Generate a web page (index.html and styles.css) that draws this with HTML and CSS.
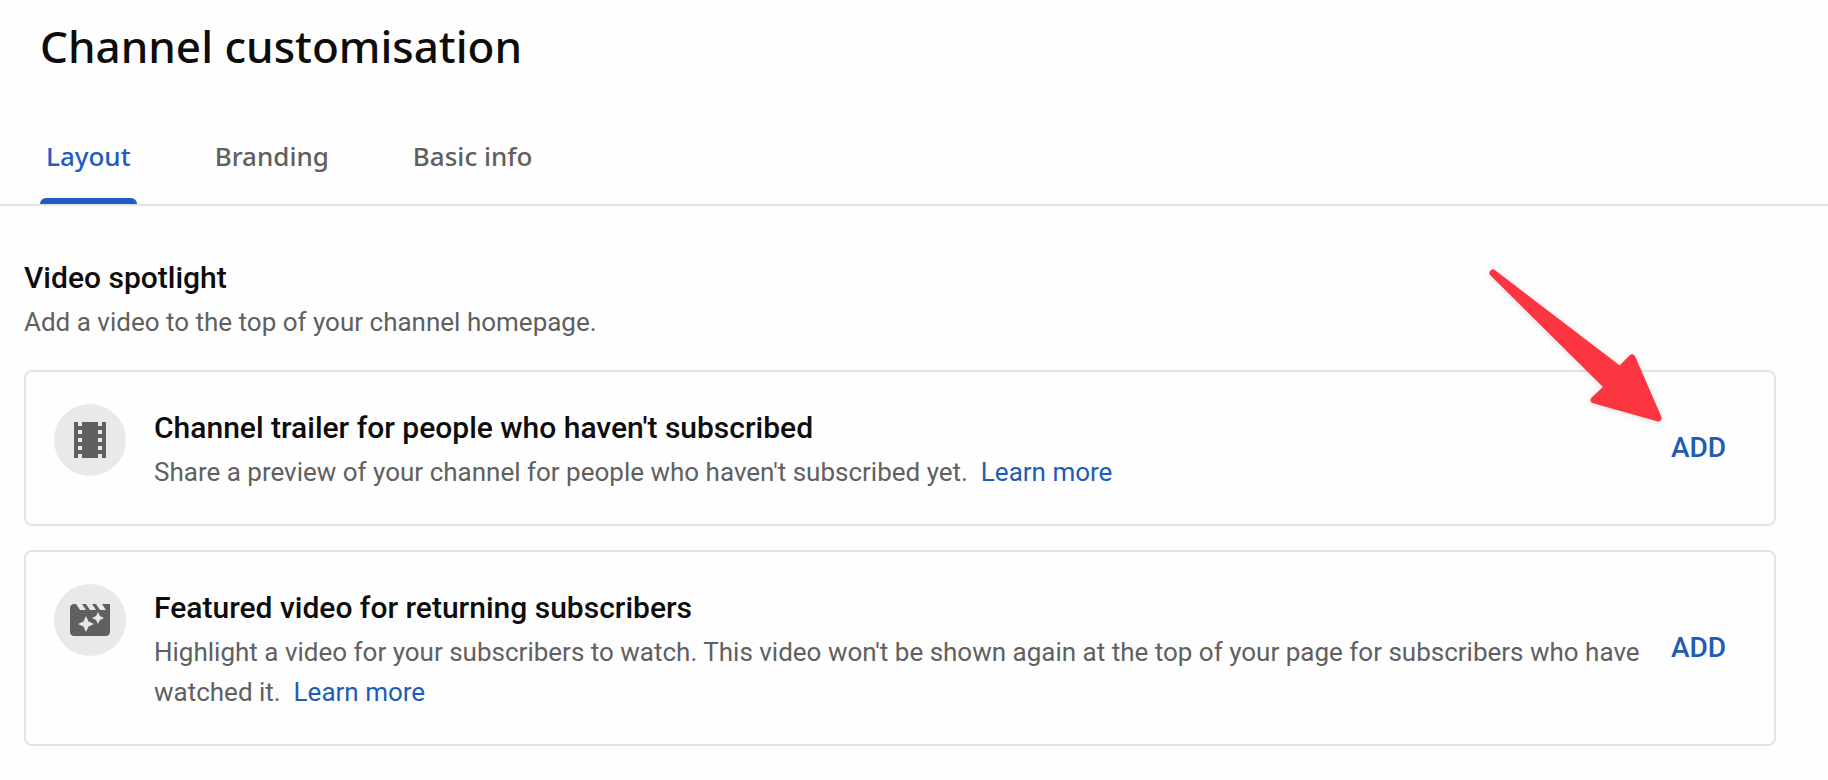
FILE: index.html
```html
<!DOCTYPE html>
<html lang="en-GB">
<head>
    <meta charset="utf-8">
    <meta name="viewport" content="width=device-width, initial-scale=1">
    <title>Channel customisation</title>
    <link rel="stylesheet" href="styles.css">
</head>
<body>

<header class="page-header">
    <h1>Channel customisation</h1>
    <nav class="tabs">
        <a class="tab active" href="#layout" aria-current="page">Layout</a>
        <a class="tab" href="#branding">Branding</a>
        <a class="tab" href="#basic-info">Basic info</a>
    </nav>
</header>

<main class="section" id="layout">
    <h2>Video spotlight</h2>
    <p>Add a video to the top of your channel homepage.</p>

    <section class="card">
        <div class="card-icon">
            <svg viewBox="0 0 24 24" aria-hidden="true">
                <path d="M18 3v2h-2V3H8v2H6V3H4v18h2v-2h2v2h8v-2h2v2h2V3h-2zM8 17H6v-2h2v2zm0-4H6v-2h2v2zm0-4H6V7h2v2zm10 8h-2v-2h2v2zm0-4h-2v-2h2v2zm0-4h-2V7h2v2z"/>
            </svg>
        </div>
        <div class="card-text">
            <h3>Channel trailer for people who haven't subscribed</h3>
            <p>Share a preview of your channel for people who haven't subscribed yet.&nbsp; <a href="#trailer-help">Learn more</a></p>
        </div>
        <button class="add-button" type="button">ADD</button>
        <!-- arrow pointing at the add button -->
        <svg class="arrow" viewBox="0 0 184 164" aria-hidden="true">
            <path d="M9 9L136 106L148 94L174 154L110 136L124 123Z"/>
        </svg>
    </section>

    <section class="card">
        <div class="card-icon">
            <svg viewBox="0 0 24 24" aria-hidden="true">
                <path d="M18 4l2 3h-3l-2-3h-2l2 3h-3l-2-3H8l2 3H7L5 4H4c-1.1 0-1.99.9-1.99 2L2 18c0 1.1.9 2 2 2h16c1.1 0 2-.9 2-2V4h-4zm-6.75 11.25L10 18l-1.25-2.75L6 14l2.75-1.25L10 10l1.25 2.75L14 14l-2.75 1.25zm5.69-3.31L16 14l-.94-2.06L13 11l2.06-.94L16 8l.94 2.06L19 11l-2.06.94z"/>
            </svg>
        </div>
        <div class="card-text">
            <h3>Featured video for returning subscribers</h3>
            <p>Highlight a video for your subscribers to watch. This video won't be shown again at the top of your page for subscribers who have watched it.&nbsp; <a href="#featured-help">Learn more</a></p>
        </div>
        <button class="add-button" type="button">ADD</button>
    </section>
</main>

</body>
</html>
```
FILE: styles.css
```css
* {
    box-sizing: border-box;
}
body {
    margin: 0;
    background: #fefefe;
    color: #0d0d0d;
    font-family: Roboto, Arial, sans-serif;
    font-size: 26px;
    line-height: 40px;
}
h1, h2, h3, p {
    margin: 0;
}
a {
    color: #1f5cb4;
    text-decoration: none;
}

.page-header {
    padding: 16px 40px 0;
    border-bottom: 2px solid #e3e3e3;
}
h1 {
    font-family: "Noto Sans", sans-serif;
    font-size: 44px;
    font-weight: 500;
    line-height: 60px;
}
.tabs {
    display: flex;
    gap: 72px;
    margin-top: 32px;
}
.tab {
    padding: 28px 6px;
    color: #606060;
    font-family: "Noto Sans", sans-serif;
    font-size: 26px;
    font-weight: 500;
    position: relative;
}
.tab.active {
    color: #1f5cc4;
}
.tab.active::after {
    content: "";
    position: absolute;
    left: 0;
    right: 0;
    bottom: 0;
    height: 6px;
    border-radius: 6px 6px 0 0;
    background: #1f5cc4;
}

.section {
    padding: 48px 52px 24px 24px;
}
h2, h3 {
    font-size: 30px;
    font-weight: 500;
    line-height: 48px;
}
p {
    color: #606060;
}

.card {
    display: flex;
    position: relative;
    margin-top: 24px;
    padding: 32px 28px;
    border: 2px solid #e3e3e3;
    border-radius: 8px;
}
p + .card {
    margin-top: 28px;
}
.card-icon {
    display: flex;
    flex: none;
    align-items: center;
    justify-content: center;
    width: 72px;
    height: 72px;
    margin-right: 28px;
    border-radius: 50%;
    background: #e9e9e9;
}
.card-icon svg {
    width: 48px;
    height: 48px;
    fill: #606060;
}
.card-text {
    flex: 1;
}
.add-button {
    flex: none;
    align-self: center;
    margin-left: 8px;
    padding: 8px 20px;
    border: 0;
    background: none;
    color: #1f5cb4;
    font: 500 28px/40px Roboto, Arial, sans-serif;
    cursor: pointer;
}

.arrow {
    position: absolute;
    top: -108px;
    right: 106px;
    width: 184px;
    height: 164px;
    fill: #fb3640;
    stroke: #fb3640;
    stroke-width: 7;
    stroke-linejoin: round;
    filter: drop-shadow(0 1px 3px rgba(0, 0, 0, 0.12));
    pointer-events: none;
}
```
